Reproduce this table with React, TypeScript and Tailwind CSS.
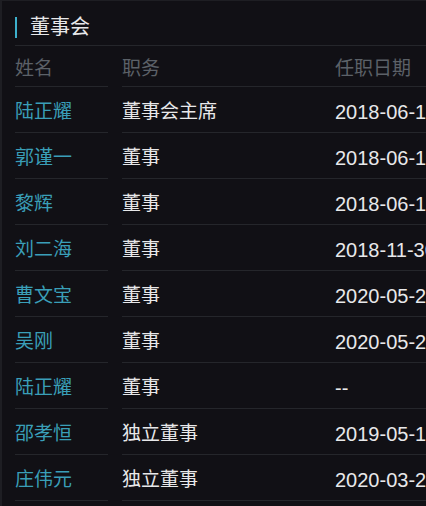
const ROWS = [
  { name: "陆正耀", role: "董事会主席", date: "2018-06-19" },
  { name: "郭谨一", role: "董事", date: "2018-06-19" },
  { name: "黎辉", role: "董事", date: "2018-06-19" },
  { name: "刘二海", role: "董事", date: "2018-11-30" },
  { name: "曹文宝", role: "董事", date: "2020-05-29" },
  { name: "吴刚", role: "董事", date: "2020-05-29" },
  { name: "陆正耀", role: "董事", date: "--" },
  { name: "邵孝恒", role: "独立董事", date: "2019-05-17" },
  { name: "庄伟元", role: "独立董事", date: "2020-03-27" },
];

const FONT = "font-['Liberation_Sans','Noto_Sans_CJK_SC',sans-serif]";

export default function App() {
  return (
    <div
      className={`h-[506px] w-[426px] overflow-hidden border-l-2 border-t border-[#1e1e23] bg-[#111015] ${FONT}`}
    >
      {/* Section title with the cyan accent bar */}
      <div className="ml-[13px] flex h-[45px] items-center border-b border-[#25262b] pt-[8px]">
        <span className="h-[21px] w-[2px] bg-[#3db0cc]" />
        <span className="ml-[13px] text-[20px] leading-none text-[#e8e8ea]">董事会</span>
      </div>

      {/* Table is wider than the screen; the date column runs off the right edge */}
      <div className="ml-[13px] w-[560px]">
        <div className="flex h-[41px] text-[19px] leading-none text-[#5c6168]">
          <div className="flex w-[93px] items-center border-b border-[#25262b] pt-[4px]">姓名</div>
          <div className="ml-[14px] flex flex-1 items-center border-b border-[#25262b] pt-[4px]">
            <div className="w-[213px]">职务</div>
            <div>任职日期</div>
          </div>
        </div>

        {ROWS.map((row, i) => (
          <div key={i} className="flex h-[46px] text-[19px] leading-none">
            <div className="flex w-[93px] items-center border-b border-[#25262b] pt-[4px] text-[#3a9fb8]">
              {row.name}
            </div>
            <div className="ml-[14px] flex flex-1 items-center border-b border-[#25262b] pt-[4px] text-[#e8e8ea]">
              <div className="w-[213px]">{row.role}</div>
              <div className="whitespace-nowrap text-[20px]">{row.date}</div>
            </div>
          </div>
        ))}
      </div>
    </div>
  );
}
